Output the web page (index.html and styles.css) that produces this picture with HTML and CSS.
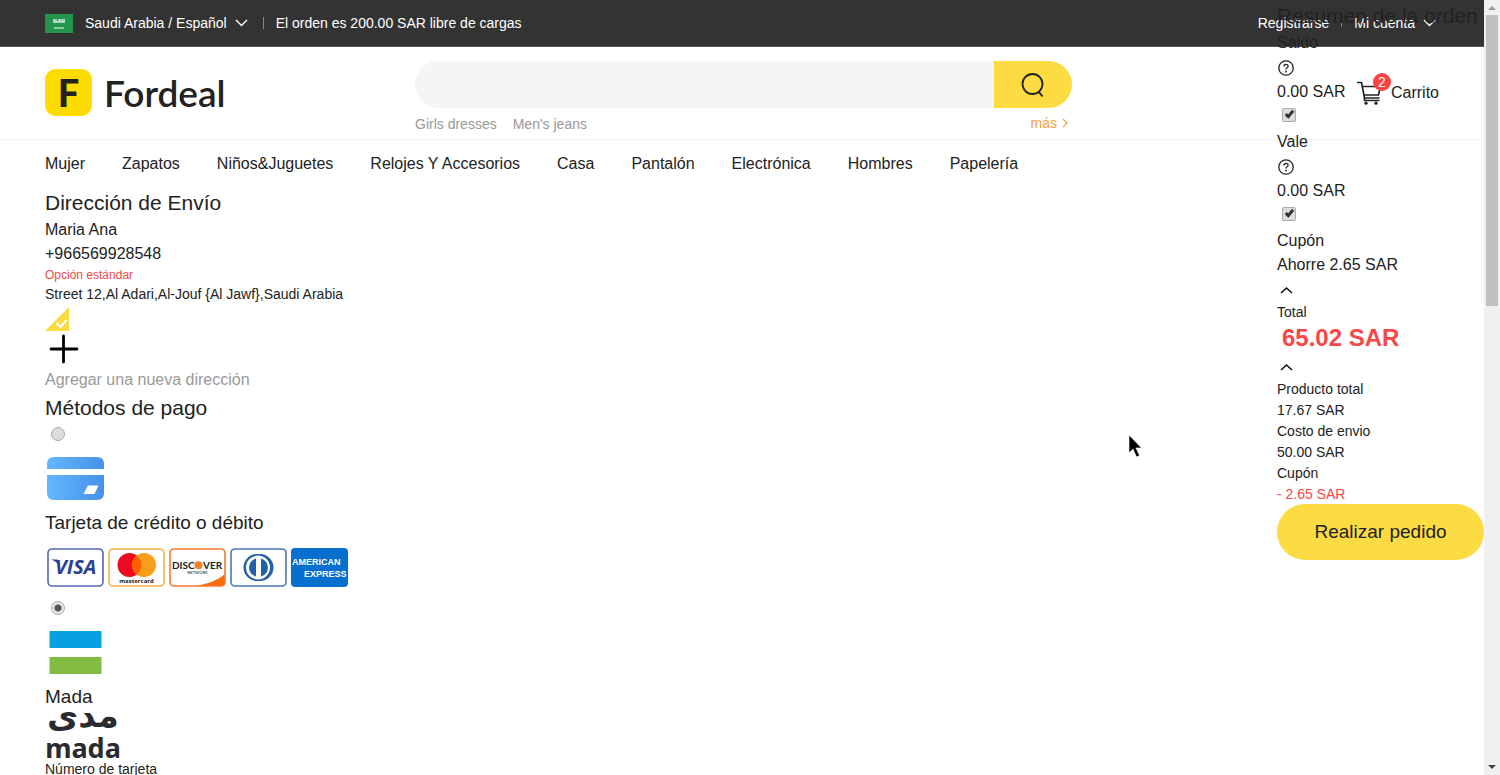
FILE: index.html
```html
<!DOCTYPE html>
<html lang="es">
<head>
<meta charset="utf-8">
<meta name="viewport" content="width=device-width, initial-scale=1">
<title>Fordeal</title>
<link rel="stylesheet" href="styles.css">
</head>
<body>
<div class="page">
  <div class="topbar">
    <a class="topbar-item locale" href="#">
      <svg class="flag" viewBox="0 0 28 19" aria-hidden="true"><rect width="28" height="19" fill="#23964d"/><path d="M8 6h2M11 5v3M13 6h3M17 5v3M19 5v3M8 8h12" stroke="#d5ecdd" stroke-width="1.4" fill="none"/><path d="M9 14h10" stroke="#d5ecdd" stroke-width="1.2"/></svg>
      <span>Saudi Arabia / Español</span>
      <svg class="chevron" viewBox="0 0 13 8" aria-hidden="true"><path d="M1 1l5.500 5.500L12 1"/></svg>
    </a>
    <span class="divider"></span>
    <span>El orden es 200.00 SAR libre de cargas</span>
    <div class="account">
      <a href="#">Registrarse</a>
      <span class="divider small"></span>
      <a class="topbar-item" href="#"><span>Mi cuenta</span>
        <svg class="chevron" viewBox="0 0 13 8" aria-hidden="true"><path d="M1 1l5.500 5.500L12 1"/></svg></a>
    </div>
  </div>

  <header class="header">
    <a class="brand" href="#"><span class="brand-mark">F</span><span class="brand-name">Fordeal</span></a>
    <div class="search-area">
      <form class="search">
        <input class="search-input" type="text" aria-label="Buscar">
        <button class="search-button" type="button" aria-label="Buscar">
          <svg viewBox="0 0 26 26" width="26" height="26" aria-hidden="true"><circle cx="12.500" cy="12" r="10" fill="none" stroke="#222" stroke-width="1.800"/><path d="M18.500 19.500l4 5" stroke="#222" stroke-width="2"/></svg>
        </button>
      </form>
      <div class="hints">
        <a href="#">Girls dresses</a><a href="#">Men's jeans</a>
        <a class="more" href="#">más <svg viewBox="0 0 6 10" width="6" height="10" aria-hidden="true"><path d="M1 1l4 4-4 4" fill="none" stroke="#f5a23c" stroke-width="1.200"/></svg></a>
      </div>
    </div>
    <a class="cart" href="#">
      <span class="cart-icon">
        <svg viewBox="0 0 26 24" width="26" height="24" aria-hidden="true"><path d="M0 1.500h4.500l3 15.500h15M5.500 5.500h18l-2 8.500H7.500M7.500 17v2.500h15" fill="none" stroke="#222" stroke-width="1.700"/><circle cx="9" cy="22.200" r="1.600" fill="#222"/><circle cx="19" cy="22.200" r="1.600" fill="#222"/></svg>
        <span class="badge">2</span>
      </span>
      <span>Carrito</span>
    </a>
  </header>

  <nav class="nav">
    <a href="#">Mujer</a><a href="#">Zapatos</a><a href="#">Niños&amp;Juguetes</a><a href="#">Relojes Y Accesorios</a><a href="#">Casa</a><a href="#">Pantalón</a><a href="#">Electrónica</a><a href="#">Hombres</a><a href="#">Papelería</a>
  </nav>

  <main class="checkout">
    <h2 class="title">Dirección de Envío</h2>
    <div class="line">Maria Ana</div>
    <div class="line">+966569928548</div>
    <div class="tag">Opción estándar</div>
    <div class="address">Street 12,Al Adari,Al-Jouf {Al Jawf},Saudi Arabia</div>
    <div class="selected"><svg viewBox="0 0 24 24" width="24" height="24" aria-hidden="true"><path d="M24 0v24H0z" fill="#fddb43"/><path d="M11.500 16l4 4 6-7" fill="none" stroke="#fff" stroke-width="2"/></svg></div>
    <button class="add" type="button">
      <svg viewBox="0 0 36 36" width="36" height="36" aria-hidden="true"><path d="M18.500 5v26M6 18h26" stroke="#000" stroke-width="2.800" stroke-linecap="round"/></svg>
      <span>Agregar una nueva dirección</span>
    </button>
    <h2 class="title">Métodos de pago</h2>
    <div class="choice"><input class="radio" id="pay-card" type="radio" name="pay"></div>
    <div class="method-icon">
      <svg viewBox="0 0 57 44" width="57" height="44" aria-hidden="true"><defs><linearGradient id="blue"><stop offset="0" stop-color="#62b8fb"/><stop offset="1" stop-color="#4890eb"/></linearGradient></defs><path d="M0 12V7q0-7 7-7h43q7 0 7 7v5zM0 18h57v18q0 7-7 7H7q-7 0-7-7z" fill="url(#blue)"/><path d="M41 28.500h10.500l-4 8.500H36.500z" fill="#fff"/></svg>
    </div>
    <label class="method-name" for="pay-card">Tarjeta de crédito o débito</label>
    <div class="cards">
      <svg viewBox="0 0 57 39" role="img" aria-label="Visa"><rect x="1" y="1" width="55" height="37" rx="4" fill="#fff" stroke="#5367b2" stroke-width="1.600"/><text class="visa" x="8" y="26">VISA</text><path d="M4 11.500h6.500l3 9q-3-7-9.500-9z" fill="#2d3f91"/></svg>
      <svg viewBox="0 0 57 39" role="img" aria-label="Mastercard"><rect x="1" y="1" width="55" height="37" rx="4" fill="#fff" stroke="#f8b24a" stroke-width="1.600"/><circle cx="21.500" cy="17" r="12" fill="#eb0a20"/><circle cx="36" cy="17" r="12" fill="#f79e1b"/><path d="M28.800 7.500a12 12 0 0 1 0 19 12 12 0 0 1 0-19z" fill="#ff5f00"/><text class="mastercard" x="28.500" y="35">mastercard</text></svg>
      <svg viewBox="0 0 57 39" role="img" aria-label="Discover"><path d="M26 38q20-3 30-12v8q0 4-4 4z" fill="#ff6b0a"/><rect x="1" y="1" width="55" height="37" rx="4" fill="none" stroke="#f77a32" stroke-width="1.600"/><text class="discover" x="3" y="21">DISC</text><circle cx="29.500" cy="17.300" r="4" fill="#f58220"/><text class="discover" x="34" y="21">VER</text><text class="network" x="28.500" y="26">NETWORK</text></svg>
      <svg viewBox="0 0 57 39" role="img" aria-label="Diners Club"><rect x="1" y="1" width="55" height="37" rx="4" fill="#fff" stroke="#4a76b5" stroke-width="1.600"/><path d="M27 6h3a13.500 13.500 0 0 1 0 27h-3a13.500 13.500 0 0 1 0-27z" fill="#2460a8"/><circle cx="28" cy="19.500" r="12" fill="#fff"/><path d="M26 10.500a9.300 9.300 0 0 0 0 18zM31 10.500a9.300 9.300 0 0 1 0 18z" fill="#2460a8"/></svg>
      <svg viewBox="0 0 57 39" role="img" aria-label="American Express"><rect width="57" height="39" rx="4" fill="#0770ce"/><text class="amex" x="1" y="17">AMERICAN</text><text class="amex" x="13" y="29">EXPRESS</text></svg>
    </div>
    <div class="choice low"><input class="radio" id="pay-mada" type="radio" name="pay" checked></div>
    <div class="method-icon">
      <svg viewBox="0 0 57 44" width="57" height="44" aria-hidden="true"><path d="M2.500 0h52v17h-52z" fill="#069fe0"/><path d="M2.500 26h52v17h-52z" fill="#82bd41"/></svg>
    </div>
    <label class="method-name" for="pay-mada">Mada</label>
    <svg class="mada" viewBox="0 0 76 50" width="76" height="50" role="img" aria-label="mada"><text class="mada-ar" x="38" y="18">مدى</text><text class="mada-en" x="38" y="49">mada</text></svg>
    <div class="address">Número de tarjeta</div>
  </main>

  <aside class="summary">
    <h2 class="title">Resumen de la orden</h2>
    <label class="line" for="use-balance">Saldo</label>
    <div class="icon-row"><svg viewBox="0 0 16 16" width="16" height="16" aria-hidden="true"><circle cx="8" cy="8" r="7.200" fill="none" stroke="#222" stroke-width="1.300"/><path d="M5.900 6.500q0-2.200 2.100-2.200t2.100 1.900q0 1.100-1.300 1.800-.8.500-.8 1.500" fill="none" stroke="#222" stroke-width="1.300"/><circle cx="8" cy="11.500" r=".9" fill="#222"/></svg></div>
    <div class="line">0.00 SAR</div>
    <div class="check-row"><input class="check" id="use-balance" type="checkbox" checked></div>
    <label class="line" for="use-voucher">Vale</label>
    <div class="icon-row"><svg viewBox="0 0 16 16" width="16" height="16" aria-hidden="true"><circle cx="8" cy="8" r="7.200" fill="none" stroke="#222" stroke-width="1.300"/><path d="M5.900 6.500q0-2.200 2.100-2.200t2.100 1.900q0 1.100-1.300 1.800-.8.500-.8 1.500" fill="none" stroke="#222" stroke-width="1.300"/><circle cx="8" cy="11.500" r=".9" fill="#222"/></svg></div>
    <div class="line">0.00 SAR</div>
    <div class="check-row"><input class="check" id="use-voucher" type="checkbox" checked></div>
    <div class="line">Cupón</div>
    <div class="line">Ahorre 2.65 SAR</div>
    <div class="icon-row"><svg viewBox="0 0 18 8" width="18" height="8" aria-hidden="true"><path d="M3 7l5.500-5L14 7" fill="none" stroke="#111" stroke-width="1.600"/></svg></div>
    <div class="total-label">Total</div>
    <div class="total">65.02 SAR</div>
    <div class="icon-row"><svg viewBox="0 0 18 8" width="18" height="8" aria-hidden="true"><path d="M3 7l5.500-5L14 7" fill="none" stroke="#111" stroke-width="1.600"/></svg></div>
    <div class="costs">
      <div>Producto total</div><div>17.67 SAR</div>
      <div>Costo de envio</div><div>50.00 SAR</div>
      <div>Cupón</div><div class="discount">- 2.65 SAR</div>
    </div>
    <button class="order" type="button">Realizar pedido</button>
  </aside>
</div>

<div class="scrollbar" aria-hidden="true">
  <svg viewBox="0 0 16 15" width="16" height="15"><path d="M4 10l4-4 4 4z" fill="#999"/></svg>
  <div class="track"><div class="thumb"></div></div>
  <svg viewBox="0 0 16 15" width="16" height="15"><path d="M4 5h8l-4 4z" fill="#444"/></svg>
</div>
<svg class="pointer" viewBox="0 0 14 24" width="14" height="24" aria-hidden="true"><path d="M1 1v18l4-4 3.500 8 3-1.500L8 14h5.500z" fill="#000" stroke="#fff" stroke-width=".6"/></svg>
</body>
</html>
```
FILE: styles.css
```css
* { box-sizing: border-box; }

body {
  margin: 0;
  height: 100vh;
  display: flex;
  overflow: hidden;
  position: relative;
  background: #fff;
  color: #222;
  font: 14px/20px "Liberation Sans", Arial, sans-serif;
}

a { color: inherit; text-decoration: none; }
svg { display: block; flex: none; }
button { border: 0; padding: 0; background: none; color: inherit; font: inherit; cursor: pointer; }

.page { position: relative; flex: 1; min-width: 0; overflow: hidden; }

.topbar {
  display: flex;
  align-items: center;
  height: 47px;
  padding: 0 48px 0 45px;
  background: #333;
  border-bottom: 1px solid #555;
  color: #fff;
}
.topbar-item { display: flex; align-items: center; gap: 8px; }
.flag { width: 28px; height: 19px; margin-right: 4px; }
.chevron { width: 13px; height: 8px; fill: none; stroke: #fff; stroke-width: 1.4; }
.divider { width: 1px; height: 12px; margin: 0 12px 0 15px; background: #888; }
.divider.small { height: 7px; margin: 0 12px; }
.account { display: flex; align-items: center; margin-left: auto; }

.header {
  display: grid;
  grid-template-columns: 370px minmax(0, 657px) 1fr;
  height: 93px;
  padding: 14px 45px 0;
  border-bottom: 1px solid #f3f3f3;
}
.brand { display: flex; align-items: center; align-self: start; gap: 12px; padding-top: 8px; }
.brand-mark {
  width: 47px;
  height: 47px;
  border-radius: 11px;
  background: #ffdc00;
  font: 900 38px/47px Lato, sans-serif;
  text-align: center;
}
.brand-name { font: 600 37px/47px Lato, sans-serif; }

.search { display: flex; height: 47px; border-radius: 24px; overflow: hidden; }
.search-input { flex: 1; min-width: 0; border: 0; padding: 0 24px; background: #f5f5f5; font: inherit; outline: 0; }
.search-button { display: grid; place-items: center; width: 78px; background: #fddb43; }
.hints { display: flex; gap: 16px; padding-top: 6px; color: #999; }
.more { display: flex; align-items: center; gap: 5px; height: 18px; margin: 0 4px 0 auto; color: #f5a23c; }

.cart { display: flex; align-items: center; justify-self: end; align-self: start; gap: 8px; padding-top: 20px; font-size: 16px; line-height: 24px; }
.cart-icon { position: relative; }
.badge {
  position: absolute;
  top: -8px;
  right: -8px;
  width: 18px;
  height: 18px;
  border-radius: 50%;
  background: #fd4242;
  color: #fff;
  font-size: 14px;
  line-height: 18px;
  text-align: center;
}

.nav { display: flex; gap: 37px; height: 47px; padding: 0 45px; font-size: 16px; line-height: 47px; white-space: nowrap; }

.checkout { display: flex; flex-direction: column; align-items: flex-start; padding-left: 45px; }
.title { margin: 0; font-size: 21px; font-weight: 400; line-height: 31px; white-space: nowrap; }
.line { display: block; font-size: 16px; line-height: 24px; }
.tag { color: #f64848; font-size: 12px; line-height: 18px; }
.address { line-height: 20px; }
.selected { padding-top: 3px; }
.add { text-align: left; color: #999; font-size: 16px; line-height: 25px; }
.choice { height: 23px; padding: 4px 6px; }
.choice.low { height: 21px; padding-top: 2px; }
.method-icon { padding: 11px 2px 9px; }
.method-name { font-size: 19px; line-height: 25px; }
.cards { display: flex; gap: 4px; padding: 13px 2px 12px; }
.cards svg { width: 57px; height: 39px; }

.radio, .check { display: block; appearance: none; width: 14px; height: 14px; margin: 0; border: 1px solid #aaa; background: #ddd; }
.radio { border-radius: 50%; }
.radio:checked { background: radial-gradient(circle, #555 0 3px, #e6e6e6 4px); }
.check { border-radius: 2px; }
.check:checked::before {
  content: "";
  display: block;
  box-sizing: content-box;
  width: 2px;
  height: 6px;
  margin-left: 4px;
  border: solid #333;
  border-width: 0 3px 3px 0;
  transform: rotate(40deg);
}

.visa { font: italic 700 20px "Open Sans", sans-serif; fill: #2d3f91; }
.mastercard { font: 700 6px "Open Sans", sans-serif; fill: #222; text-anchor: middle; }
.discover { font: 700 10px Lato, sans-serif; fill: #222; }
.network { font: 700 4px Lato, sans-serif; fill: #555; text-anchor: middle; }
.amex { font: 700 9px "Liberation Sans", Arial, sans-serif; fill: #fff; }
.mada { overflow: visible; }
.mada-ar, .mada-en { fill: #2a2b30; text-anchor: middle; }
.mada-ar { font: 700 34px "DejaVu Sans", sans-serif; }
.mada-en { font: 700 27px "Noto Sans", sans-serif; }

.summary { position: absolute; top: 0; right: 0; width: 207px; }
.icon-row { display: flex; align-items: center; height: 25px; padding-left: 1px; }
.check-row { height: 26px; padding: 4px 5px; }
.total-label { line-height: 20px; }
.total { padding-left: 5px; color: #f64848; font-size: 24px; font-weight: 700; line-height: 32px; }
.costs { display: grid; gap: 1px; }
.discount { color: #f64848; }
.order { width: 100%; height: 56px; border-radius: 28px; background: #fddb43; font-size: 19px; }

.scrollbar { display: flex; flex-direction: column; width: 16px; background: #f0f0f0; }
.track { flex: 1; padding: 0 2px; }
.thumb { height: 39%; background: #c1c1c1; }

.pointer { position: absolute; top: 434px; left: 1128px; }
```
